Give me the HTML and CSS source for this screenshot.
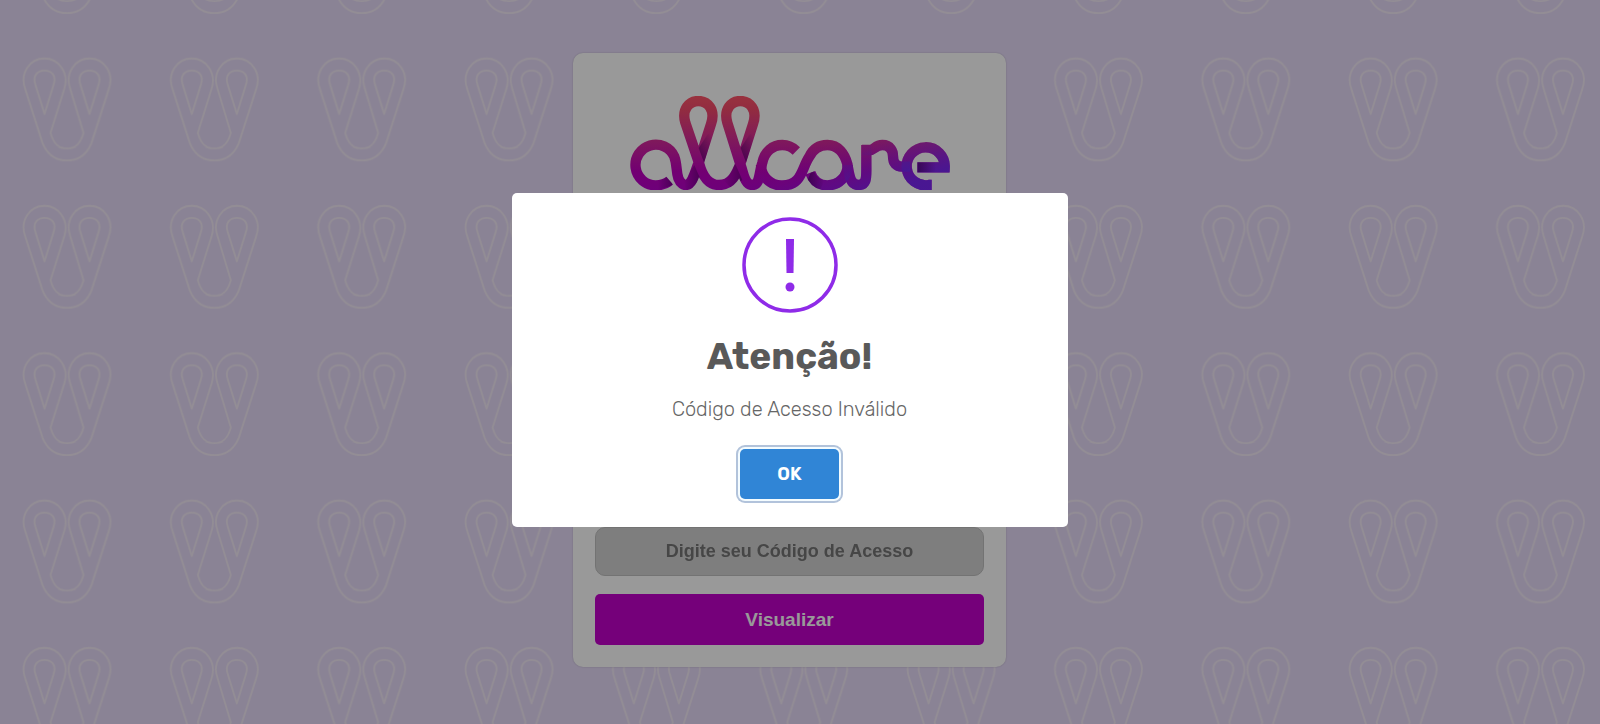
FILE: index.html
```
<!DOCTYPE html>
<html lang="pt-br">
<head>
    <meta charset="UTF-8">
    <meta name="viewport" content="width=device-width, initial-scale=1.0">
    <title>Allcare - Acesso</title>
    <link rel="stylesheet" href="styles.css">
</head>
<body>
    <svg class="background" viewBox="0 0 1600 724" preserveAspectRatio="xMinYMin slice" aria-hidden="true">
        <defs>
            <pattern id="loops" width="147.35" height="147.35" patternUnits="userSpaceOnUse">
                <g fill="none" stroke="#f5ecf8" stroke-width="1.8" stroke-linejoin="round">
                    <path d="M67 160.500C54 160.500 47 154 42.500 143L25.500 90C19 73 30 58.500 44.500 58.500C59 58.500 69 73 64.500 88L50.500 133C53 142 57 148.500 67 148.500C77 148.500 81 142 83.500 133L70 88C65 73 75 58.500 89.500 58.500C104 58.500 115 73 108.500 90L91.500 143C87 154 80 160.500 67 160.500Z"/>
                    <path d="M44.500 114L35.500 85C32 75 38 70.500 44.500 70.500C51 70.500 57 75 53.500 85Z"/>
                    <path d="M89.500 114L80.500 85C77 75 83 70.500 89.500 70.500C96 70.500 102 75 98.500 85Z"/>
                </g>
                <path transform="translate(0 -147.35)" fill="none" stroke="#f5ecf8" stroke-width="1.8" d="M42.500 143C47 154 54 160.500 67 160.500C80 160.500 87 154 91.500 143M56 145C59 148 62 148.500 67 148.500C72 148.500 75 148 78 145"/>
            </pattern>
        </defs>
        <rect width="1600" height="724" fill="url(#loops)"/>
    </svg>

    <main class="container">
        <form class="card">
            <svg class="logo" viewBox="208 168 960 283" role="img" aria-label="Allcare">
                <defs>
                    <linearGradient id="warm" gradientUnits="userSpaceOnUse" x1="0" y1="168" x2="0" y2="451">
                        <stop offset="0" stop-color="#ff5468"/>
                        <stop offset="0.15" stop-color="#f34a6c"/>
                        <stop offset="0.5" stop-color="#d2279c"/>
                        <stop offset="0.8" stop-color="#bf00bf"/>
                        <stop offset="1" stop-color="#b800cc"/>
                    </linearGradient>
                    <linearGradient id="cool" gradientUnits="userSpaceOnUse" x1="780" y1="315" x2="860" y2="510">
                        <stop offset="0" stop-color="#6a30ff" stop-opacity="0"/>
                        <stop offset="0.3" stop-color="#6a30ff" stop-opacity="0.1"/>
                        <stop offset="0.65" stop-color="#6a30ff" stop-opacity="0.4"/>
                        <stop offset="1" stop-color="#6a30ff" stop-opacity="0.8"/>
                    </linearGradient>
                    <linearGradient id="shade" x1="0" y1="1" x2="1" y2="0">
                        <stop offset="0.2" stop-color="#3c005a" stop-opacity="0.5"/>
                        <stop offset="0.9" stop-color="#3c005a" stop-opacity="0"/>
                    </linearGradient>
                    <linearGradient id="shade-left" x1="1" y1="0" x2="0" y2="0">
                        <stop offset="0.1" stop-color="#3c005a" stop-opacity="0.45"/>
                        <stop offset="1" stop-color="#3c005a" stop-opacity="0"/>
                    </linearGradient>
                    <linearGradient id="shade-right" x1="0" y1="0" x2="1" y2="0">
                        <stop offset="0.1" stop-color="#3c005a" stop-opacity="0.55"/>
                        <stop offset="1" stop-color="#3c005a" stop-opacity="0"/>
                    </linearGradient>
                    <g id="word" fill="none" stroke-width="31" stroke-linejoin="round">
                        <path d="M327 422C314 433 300 436 285 436A61 61 0 1 1 341 350C350 375 346 395 353 415C359 431 370 436 377 435C397 431 401 400 415 365L451 252C466 208 440 183 413 183C386 183 362 208 374 248L416 372C424 402 438 435 475 435C512 435 528 404 541 365L577 252C592 208 566 183 539 183C512 183 488 208 500 248L543 385C549 405 554 435 575 435C599 435 594 400 605 368C612 334 636 315 665 315C682 315 696 322 707 333"/>
                        <path d="M601 375A61 61 0 0 0 665 436C725 436 722 385 746 350C758 325 778 315 800 315C834 315 852 342 860 372C866 405 868 435 893 435C917 435 917 415 917 390L917 315"/>
                        <path d="M749 398C758 423 776 436 800 436C834 436 861 410 861 375"/>
                        <path d="M904 330L928 330C940 330 944 315 965 315C990 315 997 334 997 348C997 370 1007 380 1025 380L1048 380"/>
                        <path d="M1113 435L1105 435A57 57 0 1 1 1152 382L1070 382" stroke-linejoin="miter"/>
                    </g>
                    <mask id="word-mask" maskUnits="userSpaceOnUse" x="208" y="168" width="960" height="283">
                        <use href="#word" stroke="#fff"/>
                    </mask>
                </defs>
                <use href="#word" stroke="url(#warm)"/>
                <use href="#word" stroke="url(#cool)"/>
                <g mask="url(#word-mask)">
                    <path fill="url(#shade)" d="M414 324L442 282L457 285L431 370Z"/>
                    <path fill="url(#shade)" d="M540 324L568 282L583 285L557 370Z"/>
                    <path fill="url(#shade-left)" d="M370 420L401 376L418 414L400 445L376 450Z"/>
                    <path fill="url(#shade-left)" d="M488 420L524 372L545 420L512 445Z"/>
                    <path fill="url(#shade-left)" d="M292 418C312 420 322 408 329 392L335 436L292 450Z"/>
                    <path fill="url(#shade-right)" d="M757 382C760 402 772 418 790 421L780 448C760 444 747 432 741 420Z"/>
                    <path fill="url(#shade-right)" d="M1070 367H1125V397H1070Z"/>
                </g>
            </svg>
            <input type="text" class="code-input" placeholder="Digite seu Código de Acesso" aria-label="Código de Acesso">
            <button type="submit" class="view-button">Visualizar</button>
        </form>
    </main>

    <div class="overlay">
        <div class="modal" role="dialog" aria-modal="true" aria-labelledby="modal-title" aria-describedby="modal-text">
            <svg class="modal-icon" viewBox="0 0 96 96" aria-hidden="true">
                <circle cx="48" cy="48" r="46" fill="none" stroke="#8f2be8" stroke-width="3.500"/>
                <path fill="#8f2be8" d="M44 22H52L51.500 56H44.500Z"/>
                <circle cx="48" cy="70" r="4.500" fill="#8f2be8"/>
            </svg>
            <h2 id="modal-title" class="modal-title">Atenção!</h2>
            <p id="modal-text" class="modal-text">Código de Acesso Inválido</p>
            <button type="button" class="ok-button">OK</button>
        </div>
    </div>
</body>
</html>
```
FILE: styles.css
```
* {
    box-sizing: border-box;
}
body {
    margin: 0;
    min-height: 100vh;
    background-color: #e7dbf9;
    font-family: "Liberation Sans", Arial, sans-serif;
}
.background {
    position: fixed;
    top: 0;
    left: 0;
    width: 100%;
    height: 100%;
}
.container {
    position: relative;
    display: flex;
    justify-content: center;
    padding: 53px 21px 56px 0;
}
.card {
    display: flex;
    flex-direction: column;
    width: 100%;
    max-width: 433px;
    padding: 43px 22px 22px;
    background-color: #fff;
    border-radius: 10px;
    box-shadow: 0 0 2px rgba(0, 0, 0, 0.2);
}
.logo {
    align-self: center;
    width: 320px;
    margin-bottom: 337px;
}
.code-input {
    height: 49px;
    margin-bottom: 18px;
    padding: 0 16px;
    background-color: #d3d3d3;
    border: 1px solid #c0c0c0;
    border-radius: 10px;
    font-family: inherit;
    font-size: 18px;
    font-weight: bold;
    text-align: center;
}
.code-input::placeholder {
    color: #757575;
}
.view-button {
    height: 51px;
    background-color: #c400cc;
    border: none;
    border-radius: 5px;
    color: #fff;
    font-family: inherit;
    font-size: 19px;
    font-weight: bold;
    cursor: pointer;
}
.overlay {
    position: fixed;
    inset: 0;
    display: flex;
    align-items: center;
    justify-content: center;
    padding: 0 21px 4px 0;
    background-color: rgba(0, 0, 0, 0.4);
}
.modal {
    display: flex;
    flex-direction: column;
    align-items: center;
    width: 100%;
    max-width: 556px;
    padding: 24px 20px 28px;
    background-color: #fff;
    border-radius: 5px;
    font-family: Rubik, Roboto, sans-serif;
    text-align: center;
}
.modal-icon {
    width: 96px;
    height: 96px;
}
.modal-title {
    margin: 20px 0 18px;
    color: #595959;
    font-size: 37px;
    font-weight: 700;
    line-height: 46px;
}
.modal-text {
    margin: 0 0 28px;
    color: #666;
    font-size: 20px;
    font-weight: 300;
    line-height: 24px;
}
.ok-button {
    height: 50px;
    padding: 0 37px;
    background-color: #3085d6;
    border: none;
    border-radius: 5px;
    box-shadow: 0 0 0 2px #f4fcff, 0 0 0 4px #b2c3db;
    color: #fff;
    font-family: inherit;
    font-size: 18px;
    font-weight: 600;
    cursor: pointer;
}
```
